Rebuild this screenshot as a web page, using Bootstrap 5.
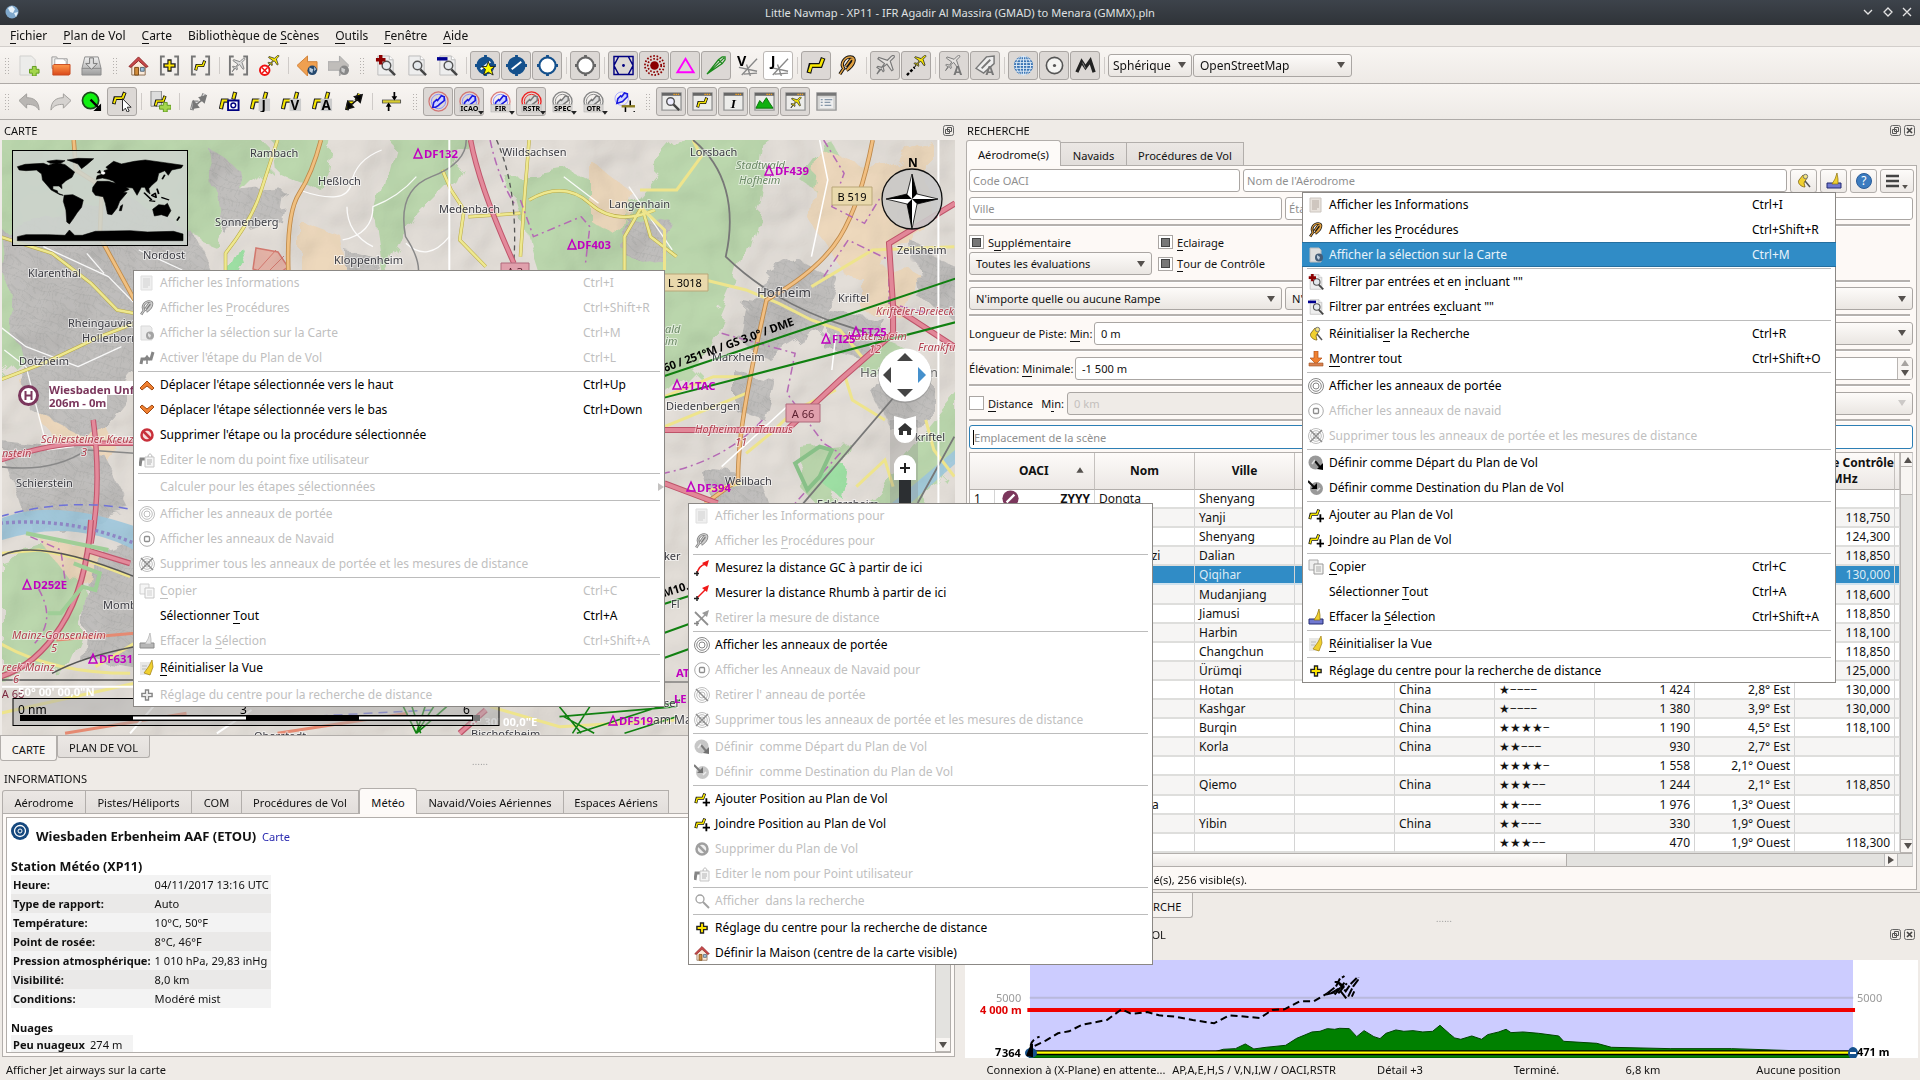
<!DOCTYPE html>
<html lang="fr">
<head>
<meta charset="utf-8">
<title>Little Navmap</title>
<link href="https://cdn.jsdelivr.net/npm/bootstrap@5.3.0/dist/css/bootstrap.min.css" rel="stylesheet">
<style>
body{width:1920px;height:1080px;overflow:hidden;background:#efebe7;color:#111;font-family:"Noto Sans",sans-serif;font-size:11.1px;line-height:19px}
svg{display:block;overflow:visible}
svg text{font-family:"Noto Sans",sans-serif}
u{text-decoration:none;box-shadow:0 1px 0 currentColor;display:inline-block;line-height:14px}
.titlebar{height:25px;background:linear-gradient(#3d434b,#2f3338);color:#dfe0e1;position:relative;flex:none}
.menubar{height:21px;padding-left:10px;gap:16px;flex:none;font-size:12px}
.toolrow{height:37px;background:linear-gradient(#f8f5f2,#eeeae6);border-top:1px solid #d2cecb;flex:none;padding-left:14px;position:relative}
.toolrow .combo{font-size:12px}
.toolrow.second{border-bottom:1px solid #aeaaa7;border-top-color:#aeaaa7}
.tb{width:30px;height:29px;margin-right:1px;border:1px solid transparent;border-radius:3px;display:flex;align-items:center;justify-content:center;flex:none}
.tb svg{width:21px;height:21px}
.tb.on{background:#dcd8d5;border-color:#aaa6a3}
.tb.lit{background:#fff;border-color:#bbb7b4}
.vsep{width:1px;height:17px;background:#cfcbc8;margin:0 3px;flex:none}
.grip{width:6px;height:17px;margin:0 5px;flex:none;background-image:radial-gradient(circle,#b5b1ae 35%,transparent 45%);background-size:3px 3px}
.grip.first{position:absolute;left:-1px}
.combo{height:23px;border:1px solid #aaa6a3;border-radius:3px;background:linear-gradient(#fdfbf9,#eae6e2);padding:0 6px;display:flex;align-items:center;justify-content:space-between;white-space:nowrap;overflow:hidden;flex:none}
.combo:after,.dn{content:"";border:4.5px solid transparent;border-top:6px solid #55514e;border-bottom:0;flex:none}
.combo.dim:after{opacity:.25}
.dock-title{height:20px;display:flex;align-items:center;justify-content:space-between;flex:none}
.dk{width:11px;height:11px}
.qtabs{display:flex;align-items:flex-end;flex:none}
.qtab{border:1px solid #b2aeab;border-bottom:0;border-left-width:0;background:linear-gradient(#ebe7e4,#e2dedb);height:23px;display:flex;align-items:center;justify-content:center;flex:none;padding-top:2px}
.qtab:first-child{border-left-width:1px;border-top-left-radius:3px}
.qtab.cur{background:#fdfaf8;margin-bottom:-1px;height:26px;border-radius:3px 3px 0 0;position:relative;border-left-width:1px}
.btabs{align-items:flex-start}
.btabs .qtab{border:1px solid #b2aeab;border-top:0;border-radius:0 0 3px 3px;height:22px}
.btabs .qtab.cur{background:#f5f2ef;height:25px;margin:0}
.pane{border:1px solid #b2aeab;background:#fdf9f6}
.form-col>*{flex:none}
.inp{height:23px;border:1px solid #aaa6a3;border-radius:3px;background:#fff;padding-left:3px;display:flex;align-items:center;color:#8f8f8f;flex:none;overflow:hidden;white-space:nowrap}
.inp.val{color:#111;padding-left:6px}
.inp.focus{border-color:#2d7fb5}
.inp.off{background:#efebe7;color:#c4c0bd}
.hline{height:3px;background:linear-gradient(#b5b1ae 66%,#fff 66%);margin-right:3px}
.chk{width:15px;height:14px;border:1px solid #aaa6a3;background:#fff;display:flex;align-items:center;justify-content:center;flex:none;margin-right:4px}
.chk.mid:before{content:"";width:9px;height:9px;background:#777;border:1px solid #444}
.sbtn{width:27px;height:24px;border:1px solid #b2aeab;border-radius:3px;background:linear-gradient(#fdfbf9,#ece8e5);display:flex;align-items:center;justify-content:center;flex:none}
.sbtn svg{width:16px;height:16px}
.ctx{position:absolute;display:block;min-width:0;padding:0;border:0;border-radius:0;margin:0;background:#fff;box-shadow:inset 0 0 0 1px #8b8885;font-size:12px;line-height:25px;z-index:5;color:#000}
.ctx .dropdown-item{display:flex;align-items:center;height:25px;padding:0 0 0 6px;color:#000;line-height:25px}
.ctx .dropdown-item.disabled{color:#bfbfbf}
.ctx .dropdown-item.hl{background:#308cc6;color:#e9f3fa;box-shadow:inset 0 1px #256f9f,inset 0 -1px #256f9f}
.ctx svg{width:16px;height:16px;margin-right:5px;flex:none}
.ctx .disabled svg{filter:grayscale(1);opacity:.55}
.ctx .key{flex:none}
.ctx .line{height:2px;margin:0 5px;border-bottom:1px solid #bcbcbc}
.air{table-layout:fixed;border-collapse:separate;border-spacing:0;width:930px;background:#fff;font-size:12px}
.air th{height:37px;border-right:1px solid #c5c1be;border-bottom:1px solid #b2aeab;background:linear-gradient(#fdfbf9,#ebe7e4);text-align:center;line-height:16px;padding:0}
.air td{height:19px;padding:0 4px;border-right:1px solid #d4d4d4;border-bottom:2px solid #dededc;line-height:17px;white-space:nowrap;overflow:hidden}
.air tr:nth-child(even) td{background:#f6f5f4}
.air tr.pick td{background:#308cc6!important;color:#dcebf5;border-bottom-color:#cfe2ee}
.info td{height:19px;line-height:19px;padding:0 2px;white-space:nowrap}
.info tr:nth-child(odd){background:#f3f3f3}.info tr:nth-child(even){background:#eae9e8}
.track{background:#e3e2df;border-left:1px solid #b9b5b2}
.arr{height:14px;background:#f8f5f2;display:flex;align-items:center;justify-content:center;border-bottom:1px solid #b9b5b2}
.status{height:22px;flex:none;line-height:24px}
.status span{flex:none;white-space:nowrap}
.dots{padding-left:470px;line-height:1px;color:#999;font-size:9px;letter-spacing:.3px}
.ns *{vector-effect:non-scaling-stroke}
</style>
</head>
<body class="d-flex flex-column">
<svg width="0" height="0" style="position:absolute"><defs>
<linearGradient id="gO" x1="0" y1="0" x2="0" y2="1"><stop offset="0" stop-color="#ff9a4d"/><stop offset="1" stop-color="#d9481a"/></linearGradient>
<linearGradient id="gG" x1="0" y1="0" x2="0" y2="1"><stop offset="0" stop-color="#f2f2f2"/><stop offset="1" stop-color="#9c9c9c"/></linearGradient>
<symbol id="page" viewBox="0 0 22 22"><path d="M3 1h12l4 4v16H3z" fill="#eee" stroke="#bbb"/><path d="M15 1v4h4" fill="#fff" stroke="#bbb"/></symbol>
<symbol id="new" viewBox="0 0 22 22"><path d="M1 1h12l4 4v16H1z" fill="#ececea" stroke="#d0d0ce"/><path d="M14 12h4v3h3v4h-3v3h-4v-3h-3v-4h3z" fill="#a4d64c" stroke="#5f9a1e"/></symbol>
<symbol id="open" viewBox="0 0 22 22"><path d="M2 2h5l1 2h10v10H2z" fill="#f2f0ee" stroke="#999"/><path d="M5 4h9l3 3v7H5z" fill="#fff" stroke="#aaa"/><path d="M3 11l1-1h17v10l-1 1H3z" fill="url(#gO)" stroke="#c74b20"/></symbol>
<symbol id="save" viewBox="0 0 22 22"><path d="M4 2h14l3 12v7H1v-7z" fill="url(#gG)" stroke="#8d8d8d"/><path d="M1 14h20" stroke="#888"/><path d="M9 3h4v6h4l-6 6-6-6h4z" fill="#ddd" stroke="#777"/></symbol>
<symbol id="home" viewBox="0 0 22 22"><path d="M4 11v10h14V11l-7-7z" fill="#fbead9" stroke="#8b6c50"/><path d="M1 12L11 2l10 10-2 1-8-7-8 7z" fill="#c9484a" stroke="#8e2828"/><path d="M7 13h4v8H7z" fill="#d08b3a" stroke="#7b4a16"/><path d="M13 13h4v4h-4z" fill="#9cc2dd" stroke="#567"/></symbol>
<symbol id="brk" viewBox="0 0 22 22"><path d="M6 1.500H2v19h4M16 1.500h4v19h-4" fill="none" stroke="#777" stroke-width="2"/></symbol>
<symbol id="plus" viewBox="0 0 22 22"><path d="M11 3v16M3 11h16" stroke="#222" stroke-width="6"/><path d="M11 5v12M5 11h12" stroke="#ffe600" stroke-width="2.600"/></symbol>
<symbol id="cplus" viewBox="0 0 22 22"><use href="#brk"/><path d="M11 4.500v13M4.500 11h13" stroke="#222" stroke-width="4.500"/><path d="M11 6v10M6 11h10" stroke="#ffe600" stroke-width="2"/></symbol>
<symbol id="route" viewBox="0 0 22 22"><path d="M3 19L5 11h10l3-8" fill="none" stroke="#111" stroke-width="5"/><path d="M3.300 18L5.500 11h9.500l2.700-7" fill="none" stroke="#f8e800" stroke-width="2.600"/></symbol>
<symbol id="croute" viewBox="0 0 22 22"><use href="#brk"/><use href="#route" x="4" y="4" width="14" height="14"/></symbol>
<symbol id="pl" viewBox="0 0 22 22"><path d="M2 20l3-5-3-2 1-1 4 1 3-4-7-5 1-1.500 9 3 4-4c2-2 4-1 3 1l-4 4 3 9-1.500 1-5-7-4 3 1 4-1 1-2-3z" stroke-width="1.200"/></symbol>
<symbol id="cplane" viewBox="0 0 22 22"><use href="#brk"/><use href="#pl" x="3" y="3" width="16" height="16" fill="#ddd" stroke="#777"/></symbol>
<symbol id="planex" viewBox="0 0 22 22"><use href="#pl" x="8" y="0" width="14" height="14" fill="#f8e800" stroke="#222"/><circle cx="6" cy="16" r="5" fill="#fff" stroke="#f01010" stroke-width="2"/><path d="M3 13l6 6M9 13l-6 6" stroke="#f01010" stroke-width="1.500"/></symbol>
<symbol id="gplane" viewBox="0 0 22 22"><use href="#pl" fill="#e5e2df" stroke="#777"/></symbol>
<symbol id="back" viewBox="0 0 22 22"><path d="M0 11L11 1v6h10v9H11v6z" fill="#f0a050" stroke="#d08038"/><circle cx="16" cy="16" r="5" fill="#24486e"/><path d="M13 13l4 2-1 4-3-2zM18 12l2 3-2 2z" fill="#bcd"/></symbol>
<symbol id="fwd" viewBox="0 0 22 22"><path d="M22 11L12 1v6H0v9h12v6z" fill="#c0bdba" stroke="#aaa"/><circle cx="17" cy="16" r="5" fill="#888"/><path d="M14 13l4 2-1 4-3-2z" fill="#ccc"/></symbol>
<symbol id="find" viewBox="0 0 22 22"><use href="#page"/><circle cx="12" cy="11" r="4.500" fill="#e5e9ed" stroke="#555" stroke-width="1.500"/><path d="M15 15l6 6" stroke="#444" stroke-width="2.500"/></symbol>
<symbol id="findp" viewBox="0 0 22 22"><use href="#find"/><path d="M6 0v10M1 5h10" stroke="#8c0000" stroke-width="3.600"/></symbol>
<symbol id="findm" viewBox="0 0 22 22"><use href="#find"/><path d="M0 4h11" stroke="#000090" stroke-width="3.600"/></symbol>
<symbol id="apt" viewBox="0 0 22 22"><path d="M11 0v22M0 11h22" stroke="#14508c" stroke-width="3"/><circle cx="11" cy="11" r="9.500" fill="#14508c"/><path d="M6 15L16 7" stroke="#fff" stroke-width="2"/></symbol>
<symbol id="apts" viewBox="0 0 22 22"><use href="#apt"/><path d="M14 7l2 5h5l-4 3 2 6-5-3-5 3 2-6-4-3h5z" fill="#ff0" stroke="#222"/></symbol>
<symbol id="apto" viewBox="0 0 22 22"><path d="M11 0v22M0 11h22" stroke="#14508c" stroke-width="3"/><circle cx="11" cy="11" r="8.500" fill="#fff" stroke="#14508c" stroke-width="2.200"/></symbol>
<symbol id="aptg" viewBox="0 0 22 22"><path d="M11 0v22M0 11h22" stroke="#666" stroke-width="3"/><circle cx="11" cy="11" r="8.500" fill="#fff" stroke="#666" stroke-width="2.200"/></symbol>
<symbol id="vor" viewBox="0 0 22 22"><path d="M1 1.500h20v19H1zM6 1.500h10l5 9.500-5 9.500H6L1 11z" fill="none" stroke="#000080" stroke-width="1.500"/><circle cx="11" cy="11" r="1.500" fill="#000080"/></symbol>
<symbol id="ndb" viewBox="0 0 22 22"><g fill="none" stroke="#8b0000" stroke-width="1.800" stroke-dasharray="1.700 1.800"><circle cx="11" cy="11" r="10"/><circle cx="11" cy="11" r="7"/></g><circle cx="11" cy="11" r="4.500" fill="#8b0000"/></symbol>
<symbol id="wpt" viewBox="0 0 22 22"><path d="M11 4l8.500 14h-17z" fill="none" stroke="#f0f" stroke-width="2"/></symbol>
<symbol id="ils" viewBox="0 0 22 22"><path d="M1 20L13 5l4-3h3v3l-3 4zM13 5l4 4M1 20L19 3" fill="none" stroke="#1a8a1a" stroke-width="1.300"/></symbol>
<symbol id="airv" viewBox="0 0 22 22"><path d="M2 13l19 4M21 4L5 21M10 10l4 12M7 20l14-1" stroke="#888" stroke-width="1.400"/><text x="0" y="12" font-size="15" font-weight="bold">V</text></symbol>
<symbol id="airj" viewBox="0 0 22 22"><path d="M2 13l19 4M21 4L5 21M10 10l4 12M7 20l14-1" stroke="#888" stroke-width="1.400"/><text x="3" y="12" font-size="15" font-weight="bold">J</text></symbol>
<symbol id="clip" viewBox="0 0 22 22"><path d="M3 20L7 14C3 9 8 2 14 2c7 0 4 9-4 14M9 12l5-7c2-2 4 0 2 3l-6 8" fill="none" stroke="#111" stroke-width="3.500"/><path d="M3 20L7 14C3 9 8 2 14 2c7 0 4 9-4 14M9 12l5-7c2-2 4 0 2 3l-6 8" fill="none" stroke="#e0a040" stroke-width="1.500"/></symbol>
<symbol id="ptrail" viewBox="0 0 22 22"><use href="#pl" x="7" y="0" width="15" height="15" fill="#f8e800" stroke="#222"/><path d="M1 21l8-8" stroke="#000" stroke-width="2.500" stroke-dasharray="3 2"/></symbol>
<symbol id="planeA" viewBox="0 0 22 22"><use href="#gplane" x="0" y="0" width="18" height="18"/><text x="10" y="21" font-size="13" font-weight="bold" fill="#777">A</text></symbol>
<symbol id="shipA" viewBox="0 0 22 22"><path d="M1 14L12 2l8-1v8L9 19z" fill="#eee" stroke="#777" stroke-width="1.500"/><path d="M7 14l9-9" stroke="#777" stroke-width="2"/><text x="11" y="21" font-size="13" font-weight="bold" fill="#777">A</text></symbol>
<symbol id="globe" viewBox="0 0 22 22"><circle cx="11" cy="11" r="10" fill="#3a74b4"/><g fill="none" stroke="#dbe9f6"><ellipse cx="11" cy="11" rx="3.500" ry="10"/><ellipse cx="11" cy="11" rx="7.500" ry="10"/><path d="M11 1v20M1 11h20M3 5h16M3 17h16M2 8h18M2 14h18"/></g></symbol>
<symbol id="ring" viewBox="0 0 22 22"><circle cx="11" cy="11" r="8.500" fill="#f4f4f2" stroke="#555" stroke-width="1.700"/><circle cx="11" cy="11" r="1.700" fill="#555"/></symbol>
<symbol id="hill" viewBox="0 0 22 22"><path d="M2 18L7 7l4 6 5-7 4 12" fill="none" stroke="#222" stroke-width="3.500"/><path d="M8 8l3 6" stroke="#888"/></symbol>
<symbol id="undo" viewBox="0 0 22 22"><path d="M0 10l8-7v4c8 0 13 4 13 13-3-5-7-6-13-6v4z" fill="#b9b6b3" stroke="#a09d9a"/></symbol>
<symbol id="redo" viewBox="0 0 22 22"><path d="M22 10l-8-7v4C6 7 1 11 1 20c3-5 7-6 13-6v4z" fill="#d5d2cf" stroke="#a09d9a"/></symbol>
<symbol id="dep" viewBox="0 0 22 22"><circle cx="10" cy="10" r="8.500" fill="#10f010" stroke="#1c4a1c" stroke-width="1.800"/><path d="M10 9l8 8" stroke="#000" stroke-width="2.500"/><path d="M21 21v-8l-8 8z"/></symbol>
<symbol id="edit" viewBox="0 0 22 22"><use href="#route" x="-1" y="-1" width="18" height="17"/><path d="M11 8l9 9h-4l2 4-2 1-2-4-3 3z" fill="#fff" stroke="#222"/></symbol>
<symbol id="radd" viewBox="0 0 22 22"><path d="M1 0h11v16H1z" fill="#ddd" stroke="#888"/><use href="#route" x="3" y="3" width="16" height="15"/><path d="M14 12h4v3h4v4h-4v3h-4v-3h-4v-4h4z" fill="#a4d64c" stroke="#5f9a1e"/></symbol>
<symbol id="rplus" viewBox="0 0 22 22"><use href="#route" x="0" y="1" width="18" height="18"/><path d="M17 10v11M12 16h10" stroke="#000" stroke-width="2.500"/></symbol>
<symbol id="calc" viewBox="0 0 22 22"><path d="M4 20l2-8h5M14 10l3-7" fill="none" stroke="#888" stroke-width="4"/><path d="M4 19l2-7h5M14 9l3-6" fill="none" stroke="#ddd" stroke-width="1.500"/><path d="M8 15l7-6M19 5l-2 7-5-5zM5 18l1-7 5 6z" stroke="#777" fill="#777" stroke-width="1.500"/></symbol>
<symbol id="calcb" viewBox="0 0 22 22"><path d="M4 20l2-8h5M14 10l3-7" fill="none" stroke="#111" stroke-width="4"/><path d="M4 19l2-7h5M14 9l3-6" fill="none" stroke="#f8e800" stroke-width="2"/><path d="M8 15l7-6M20 4l-2 8-6-6zM4 19l1-8 6 6z" stroke="#111" stroke-width="1.500"/></symbol>
<symbol id="rpre" viewBox="0 0 22 22"><path d="M2 19l2-9h6M15 9l2-8" fill="none" stroke="#222" stroke-width="4.500"/><path d="M2 18l2-8h5.500M15 8l1.700-6" fill="none" stroke="#f8e800" stroke-width="2.200"/></symbol>
<symbol id="rv" viewBox="0 0 22 22"><use href="#rpre"/><path d="M9.500 10h11v10h-11z" fill="#fff" stroke="#000080" stroke-width="2"/><circle cx="15" cy="15" r="2.500" fill="none" stroke="#000080" stroke-width="1.500"/></symbol>
<symbol id="rj" viewBox="0 0 22 22"><use href="#rpre"/><path d="M9 8h12v13H9z" fill="#ccc"/><text x="12" y="20" font-size="14" font-weight="bold">J</text></symbol>
<symbol id="rvv" viewBox="0 0 22 22"><use href="#rpre"/><path d="M9 8h12v13H9z" fill="#ccc"/><text x="10" y="20" font-size="14" font-weight="bold">V</text></symbol>
<symbol id="ra" viewBox="0 0 22 22"><use href="#rpre"/><path d="M9 8h12v13H9z" fill="#ccc"/><text x="10" y="20" font-size="14" font-weight="bold">A</text></symbol>
<symbol id="alt" viewBox="0 0 22 22"><path d="M1 11h20" stroke="#555" stroke-width="4"/><path d="M2 11h18" stroke="#d8cc30" stroke-width="2.500"/><path d="M8 21v-7M14 1v7" stroke="#000" stroke-width="1.800"/><path d="M8 12l-3 4.500h6zM14 10l-3-4.500h6z"/></symbol>
<symbol id="as" viewBox="0 0 22 22"><circle cx="11" cy="11" r="10" fill="none" stroke="currentColor" stroke-opacity=".6" stroke-width="1.300"/><circle cx="11" cy="11" r="7.500" fill="none" stroke="#88f"/><path d="M5 17l1-5 3-3 1 1 4-5 3 1 0 4-5 4-1 1-3 2z" fill="#cfd4ff" stroke="#1818e0" stroke-width="1.700"/></symbol>
<symbol id="asg" viewBox="0 0 22 22"><circle cx="11" cy="11" r="10" fill="none" stroke="currentColor" stroke-width="1.400"/><circle cx="11" cy="11" r="7.500" fill="none" stroke="currentColor"/><path d="M5 17l1-5 3-3 1 1 4-5 3 1 0 4-5 4-1 1-3 2z" fill="#ddd" stroke="#777" stroke-width="1.500"/></symbol>
<symbol id="asalt" viewBox="0 0 22 22"><circle cx="8" cy="8" r="7" fill="none" stroke="#aaf"/><path d="M3 13l1-5 3-3 1 1 3-4 3 1 0 3-4 4-1 1-3 1z" fill="#cfd4ff" stroke="#1818e0" stroke-width="1.700"/><path d="M8 16h14" stroke="#8a7c20" stroke-width="2.500"/><path d="M12 22v-5M17 10v5" stroke="#000" stroke-width="1.600"/><path d="M20 21h6l-3 4z" fill="#222"/></symbol>
<symbol id="win" viewBox="0 0 22 22"><path d="M1 2h20v18H1z" fill="#ececea" stroke="#999" stroke-width="1.500"/><path d="M1 2h20v3H1z" fill="#666"/><path d="M13 3.500h6" stroke="#f0a020" stroke-width="1.500" stroke-dasharray="1.500 .8"/></symbol>
<symbol id="wf" viewBox="0 0 22 22"><use href="#win"/><circle cx="10" cy="11" r="4" fill="#eef" stroke="#555" stroke-width="1.500"/><path d="M13 14l6 6" stroke="#444" stroke-width="2.500"/></symbol>
<symbol id="wr" viewBox="0 0 22 22"><use href="#win"/><use href="#route" x="4" y="5" width="14" height="14"/></symbol>
<symbol id="wi" viewBox="0 0 22 22"><use href="#win"/><text x="8" y="18" font-size="14" font-weight="bold" font-style="italic" style="font-family:'Liberation Serif',serif">I</text></symbol>
<symbol id="wh" viewBox="0 0 22 22"><use href="#win"/><path d="M2 18l4-8 3 3 4-6 3 5 4 6z" fill="#10b010" stroke="#087008"/></symbol>
<symbol id="wp" viewBox="0 0 22 22"><use href="#win"/><use href="#pl" x="5" y="6" width="13" height="13" fill="#f8e800" stroke="#222"/></symbol>
<symbol id="wl" viewBox="0 0 22 22"><path d="M1 2h20v18H1z" fill="#d5d5d3" stroke="#999" stroke-width="1.500"/><path d="M1 2h20v3H1z" fill="#777"/><path d="M4 7h14v11H4z" fill="#eee"/><path d="M5 9h2M5 12h2M5 15h2M9 9h8M9 12h6M9 15h7" stroke="#89a" stroke-width="1.300"/></symbol>
<symbol id="doc" viewBox="0 0 16 16"><path d="M2 1h11v14H2z" fill="#e8e2dc" stroke="#ccc6c0"/><path d="M4 4h7M4 6h7M4 8h7M4 10h7M4 12h5" stroke="#b5aaa2"/></symbol>
<symbol id="docg" viewBox="0 0 16 16"><path d="M2 1h9l2 2v12H2z" fill="#dedede" stroke="#bbb"/><circle cx="11" cy="10.500" r="4" fill="#445d78"/><path d="M9 8l3 2-1 3-2-2z" fill="#bcd"/></symbol>
<symbol id="act" viewBox="0 0 16 16"><path d="M2 14l1-5h9l2-7" fill="none" stroke="#222" stroke-width="3"/><path d="M8 14V7M5 10l3-4 3 4" fill="none" stroke="#222" stroke-width="1.500"/></symbol>
<symbol id="up" viewBox="0 0 16 16"><path d="M1 11l7-7 7 7-2 2-5-4-5 4z" fill="#f08030" stroke="#a04a14"/></symbol>
<symbol id="down" viewBox="0 0 16 16"><path d="M1 5l7 7 7-7-2-2-5 4-5-4z" fill="#f08030" stroke="#a04a14"/></symbol>
<symbol id="no" viewBox="0 0 16 16"><circle cx="8" cy="8" r="5.500" fill="#f6dcdc" stroke="#c8303a" stroke-width="2.500"/><path d="M4 4l8 8" stroke="#c8303a" stroke-width="2.500"/></symbol>
<symbol id="name" viewBox="0 0 16 16"><path d="M1 14l1-7h5" fill="none" stroke="#222" stroke-width="3"/><path d="M6 5h9v10H6z" fill="#eee" stroke="#999"/><path d="M9 5c0-4 4-4 4 0M8 8h5M8 10h5M8 12h4" fill="none" stroke="#777"/></symbol>
<symbol id="rings" viewBox="0 0 16 16"><g fill="none" stroke="#888"><circle cx="8" cy="8" r="7.500"/><circle cx="8" cy="8" r="5.300"/><circle cx="8" cy="8" r="3"/></g></symbol>
<symbol id="nring" viewBox="0 0 16 16"><circle cx="8" cy="8" r="7.300" fill="none" stroke="#666"/><rect x="5.500" y="5.500" width="5" height="5" rx="1" fill="none" stroke="#333" stroke-width="1.300"/></symbol>
<symbol id="ringx" viewBox="0 0 16 16"><use href="#rings"/><path d="M2 2l12 12M14 2L2 14" stroke="#333" stroke-width="1.500"/></symbol>
<symbol id="ring1" viewBox="0 0 16 16"><use href="#rings"/><path d="M2 2l12 12" stroke="#333" stroke-width="1.500"/></symbol>
<symbol id="copy" viewBox="0 0 16 16"><path d="M1 1h9v10H1z" fill="#eee" stroke="#aaa"/><path d="M6 5h9v10H6z" fill="#f3f3f1" stroke="#999"/><path d="M8 8h5M8 10h5M8 12h5" stroke="#aaa"/></symbol>
<symbol id="clr" viewBox="0 0 16 16"><path d="M1 10h14v5H1z" fill="#7078d0" stroke="#222a70"/><path d="M11 0l-2 6-3 5h6l0-5z" fill="#f0d030" stroke="#8a7010" stroke-width=".7"/></symbol>
<symbol id="rst" viewBox="0 0 16 16"><path d="M1 2h11v13H1z" fill="#e8e8e6"/><path d="M3 6h5M3 9h4" stroke="#bbb"/><path d="M13 0l-3 6-5 7 6 2 3-8z" fill="#f0d030" stroke="#a08010" stroke-width=".7"/></symbol>
<symbol id="broom" viewBox="0 0 16 16"><path d="M7 2L3 7c-2 3 2 7 6 7l-1-4 3-5z" fill="#f0d030" stroke="#7a6010" stroke-width=".8"/><circle cx="9.500" cy="3.500" r="2.200" fill="#f4e480" stroke="#777"/><path d="M9 8l5 6" stroke="#555" stroke-width="1.500"/></symbol>
<symbol id="all" viewBox="0 0 16 16"><path d="M6 0h4v7h4l-6 6-6-6h4z" fill="#f08030" stroke="#b0501a" stroke-width=".7"/><path d="M1 12h14v3H1z" fill="#d88050" stroke="#a05020" stroke-width=".6"/></symbol>
<symbol id="setd" viewBox="0 0 16 16"><circle cx="7.500" cy="7.500" r="7" fill="#999"/><path d="M7 6l5 6" stroke="#111" stroke-width="2"/><path d="M15 15V8l-6 6z"/><path d="M4 9l3-4" stroke="#ddd" stroke-width="1.500"/></symbol>
<symbol id="sete" viewBox="0 0 16 16"><circle cx="8.500" cy="8.500" r="6.500" fill="#999"/><path d="M0 1l6 6" stroke="#111" stroke-width="2"/><path d="M9 3v6H3z"/><path d="M9 11l3-3" stroke="#ddd" stroke-width="1.500"/></symbol>
<symbol id="gc" viewBox="0 0 16 16"><path d="M3 14C4 8 7 5 12 4" fill="none" stroke="#f01818" stroke-width="1.500"/><path d="M15 0l-2 7-5-4z" fill="#f01818"/><path d="M3 11v5M0 13.500h5" stroke="#222" stroke-width="1.500"/></symbol>
<symbol id="rh" viewBox="0 0 16 16"><path d="M3 13l9-9" fill="none" stroke="#f01818" stroke-width="1.500"/><path d="M15 0l-2 7-5-4z" fill="#f01818"/><path d="M3 11v5M0 13.500h5" stroke="#222" stroke-width="1.500"/></symbol>
<symbol id="gcx" viewBox="0 0 16 16"><use href="#rh"/><path d="M1 2l13 13" stroke="#333" stroke-width="1.800"/></symbol>
<symbol id="mag" viewBox="0 0 16 16"><circle cx="6" cy="6" r="4" fill="none" stroke="#555" stroke-width="1.300"/><path d="M9 9l6 6" stroke="#555" stroke-width="2"/></symbol>
<symbol id="q" viewBox="0 0 16 16"><circle cx="8" cy="8" r="7.500" fill="#3c7cc0" stroke="#2a5c98"/><text x="5.200" y="12.300" font-size="12" fill="#fff">?</text></symbol>
<symbol id="dock" viewBox="0 0 11 11"><rect x=".5" y=".5" width="10" height="10" rx="2" fill="none" stroke="#666"/><path d="M4.500 2.500h4v4h-4zM2.500 4.500h4v4h-4z" fill="none" stroke="#555"/></symbol>
<symbol id="close" viewBox="0 0 11 11"><rect x=".5" y=".5" width="10" height="10" rx="2" fill="none" stroke="#666"/><path d="M3 3l5 5M8 3L3 8" stroke="#444" stroke-width="1.700"/></symbol>
</defs></svg>

<header class="titlebar d-flex align-items-center justify-content-center">
  <span>Little Navmap - XP11 - IFR Agadir Al Massira (GMAD) to Menara (GMMX).pln</span>
  <svg width="1920" height="25" style="position:absolute;left:0;top:0"><circle cx="12" cy="12" r="6.500" fill="#7fa8cc"/><path d="M8 8l4-2 3 3-2 4-3-1zM14 13l4-1-2 5z" fill="#e8f2fa"/><g fill="none" stroke="#e4e4e4" stroke-width="1.300"><path d="M1864 10l4 4 4-4M1888 8l4 4-4 4-4-4zM1903 8l8 8M1911 8l-8 8"/></g></svg>
</header>
<nav class="menubar d-flex align-items-center"><span><u>F</u>ichier</span><span><u>P</u>lan de Vol</span><span><u>C</u>arte</span><span>Bibliothèque de <u>S</u>cènes</span><span><u>O</u>utils</span><span><u>F</u>enêtre</span><span><u>A</u>ide</span></nav>
<div class="toolrow d-flex align-items-center" id="bar1"></div>
<div class="toolrow second d-flex align-items-center" id="bar2"></div>

<main class="d-flex flex-grow-1" style="min-height:0">
 <section class="d-flex flex-column" style="width:957px;padding-left:2px">
  <div class="dock-title" style="padding:0 3px 0 2px"><span>CARTE</span><svg class="dk"><use href="#dock"/></svg></div>
  <svg id="map" width="953" height="595" viewBox="2 140 953 595" style="overflow:hidden;flex:none">
   <defs>
   <filter id="rough"><feTurbulence type="fractalNoise" baseFrequency=".013" numOctaves="3" seed="4" result="n"/><feDiffuseLighting in="n" surfaceScale="14" lighting-color="#fff" result="l"><feDistantLight azimuth="225" elevation="60"/></feDiffuseLighting></filter>
   <filter id="wob" x="-5%" y="-5%" width="110%" height="110%"><feTurbulence type="fractalNoise" baseFrequency=".035" numOctaves="3" seed="2"/><feDisplacementMap in="SourceGraphic" scale="26"/></filter>
   <pattern id="urb" width="11" height="9" patternUnits="userSpaceOnUse" patternTransform="rotate(22)"><rect width="11" height="9" fill="#c2c0be"/><path d="M0 0h11M0 0v9M5 0v5" stroke="#acaaa8" stroke-width=".7"/></pattern></defs>
   <path fill="#e4dfd9" d="M0 140h960v600H0z"/>
   <g filter="url(#wob)">
    <g fill="#bcd8ae"><path d="M0 130h260l10 40-30 30-40 20-25 35-30-10-60 25-30 60-90 70z"/><path d="M270 130h60l-10 60-45-20zM395 130h80l-20 50-40 40-30 60-10-70zM510 180l60-10 60 30 60-70h80l-10 70-25 90-30 70-50 50-60-20-40-60-25-80z"/><path d="M830 140l20 30-20 30-30-20zM0 560l60-20 30 60-30 70-60 10zM860 330l50 20-10 30-40-10zM800 448l50-5-25 70-24-25zM870 500l90-110v60l-50 90zM180 140l60 40-30 60-50-20z"/></g>
    <g fill="#eed9bd"><path d="M300 220l40 15 10 50-50 5zM590 160l40 30-10 50-30-20zM820 150l50 20 60-30v90l-80 50-40-60zM860 260l60 10-10 50-50-10zM20 380l60 10 40 60-50 20zM40 540l50 5 40 40-60-5z"/></g>
    <g fill="url(#urb)"><path d="M0 230l130-30 60 30 30 60-60 60-70 90-60-30-20-90zM210 150l30 20 10 50-30 10zM240 195l45-5-5 30-30 10zM345 250l40 10-10 30-30-5zM625 215l50 10-10 40-40-10zM750 290l50-30 40 20-20 50-50 30-30-20zM735 370l40 10-10 40-30-10zM620 455l-10 30 40 10 10-20zM910 240l50 30v50l-40-20zM825 310l60 10-20 40-40-10zM0 440l100 10 30 60-100 20zM90 560l50-20v130l-60-10zM700 470l60 10 10 30h-60z"/><path d="M870 390l60-10v40l-40 10z"/></g>
    <path fill="#9ee0a4" d="M240 245l6 20-16 30-5-18zM830 465l15 0-6 30-15-10z"/>
   </g>
   <path fill="#e6a99b" fill-opacity=".8" stroke="#d67a70" stroke-width="1.500" d="M256 248l22 4 10 15-13 9-22-7z"/><path d="M258 270l18-20M266 274l18-18" stroke="#d67a70"/>
   <path d="M2 518q50-20 132 8v24q-60-32-132-10zM750 600q80-30 110-70l95-80v14L880 530q-40 60-120 85z" fill="#9fc9de" fill-opacity=".9"/>
   <path d="M2 140h953v595H2z" filter="url(#rough)" style="mix-blend-mode:multiply" opacity=".34"/>
   <g class="ns" fill="none" stroke-linejoin="round" transform="translate(0 120) scale(.4337 .3333)">
    <g stroke="#fff" stroke-width="1.300" opacity=".9"><path d="M880 90q-60 30-70 100t-120 20M960 170q-40 60-100 90 0 80-70 100M860 380q-60-40-60-120M1036 350q-50 80-100 20M10 690l50 50 50 250 60-10M0 620l60 60 120 60 100-60M100 380l150 90 60 80M200 400l40 60M320 390l100 60M1300 170l80 80M1450 200l100 190"/></g>
    <g stroke="#b9a944" stroke-width="3.500"><path d="M640 60q-20 80-40 160T520 400l0 60M1020 150l20 60 30 60-10 90 60 80M1220 60l-10 160-10 190M1220 240q80-60 140 10t150 20M1480 260l20 90 60 60M1480 260l-40 90 0 110M0 350l120 50 90 90 60 80 40 10M310 610l-80 40-130 80-100 50M1080 290l120-10"/></g>
    <g stroke="#eee88f" stroke-width="2.500"><path d="M640 60q-20 80-40 160T520 400l0 60M1020 150l20 60 30 60-10 90 60 80M1220 60l-10 160-10 190M1220 240q80-60 140 10t150 20M1480 260l20 90 60 60M1480 260l-40 90 0 110M0 350l120 50 90 90 60 80 40 10M310 610l-80 40-130 80-100 50M1080 290l120-10"/></g>
    <g stroke="#bf8a4a" stroke-width="4.500"><path d="M740 60q-20 100-50 160t-25 240M170 60l5 90 60 50-5 150 80 190"/></g><g stroke="#f0c080" stroke-width="2.800"><path d="M740 60q-20 100-50 160t-25 240M170 60l5 90 60 50-5 150 80 190"/></g>
    <path stroke="#888" stroke-width="1.500" d="M1075 60q0 70-80 110t-60 180q30 60 30 100M0 1040q120 20 200-50l110 10"/>
    <path stroke="#b56ab5" stroke-width="1.500" stroke-dasharray="8 4 2 4" d="M1130 60q20 120 60 200M1200 240l30 110 110-60 20 30-10 110"/>
    <path stroke="#555" stroke-width="1.300" stroke-dasharray="5 4" d="M1145 60q50 150 40 360"/>
    <path stroke="#c0566c" stroke-width="5.500" d="M1085 60q20 140 100 370M0 1020q120-50 190-50h120M215 900q20 200-5 370"/><path stroke="#e38a9b" stroke-width="3.500" d="M1085 60q20 140 100 370M0 1020q120-50 190-50h120M215 900q20 200-5 370"/>
    <path stroke="#6e72d8" stroke-width="1.500" stroke-dasharray="9 6" d="M0 1190q160-60 310-20"/><path stroke="#8e86c4" stroke-width="3.500" stroke-dasharray="3 3" d="M0 1210q160-20 310 60"/>
    <path stroke="#fff" stroke-width="2" d="M1036 60v390"/>
   </g>
   <g class="ns" fill="none" transform="translate(640 120) scale(.4082 .3333)">
    <path stroke="#eee48c" stroke-width="3" d="M130 60l20 50-60 100-90 0M0 260l60 70 0 120M160 480l100 30 80 40 80 50 70 30 60 90M60 830l120-60 70 0M60 920l200-100M260 1000l60-60 60-70 100-60M250 1090l-80 20M420 500l150-110 200-10M500 760l20 80 80 60M700 900l20 90 50 80M530 1100l70-80 20 80"/>
    <path stroke="#bd8849" stroke-width="4.500" d="M570 60q-30 190-80 290T310 540q-30 160-50 300t-20 240l-80 70"/><path stroke="#f1bf82" stroke-width="2.800" d="M570 60q-30 190-80 290T310 540q-30 160-50 300t-20 240l-80 70"/>
    <path stroke="#777" stroke-width="1.800" d="M130 60q60 60 80 150t0 200q100 120 250 190l150 60M700 720L400 1150M770 950l-90 200"/>
    <path stroke="#fff" stroke-width="1.500" d="M440 60l20 120-40 230M480 640l-10 110M200 1040l160-180"/>
    <path stroke="#b56ab5" stroke-width="1.500" stroke-dasharray="8 4 2 4" d="M450 60l50 100-30 100 80 50 40-80M450 470l60-110 100 60 0 130 100 30M200 640l180 60-20 120 90 150 40 30-110 150M300 900q-90 120-240 160"/>
    <path stroke="#88c088" stroke-width="4" d="M380 1030l60-50 30 10-30 80-30 40z"/>
    <path stroke="#be5369" stroke-width="6" d="M772 250L610 370l10 190 0 80-130 140-70 80-60 70H60M620 560l150 120M60 1090l130 60"/><path stroke="#e28798" stroke-width="4" d="M772 250L610 370l10 190 0 80-130 140-70 80-60 70H60M620 560l150 120M60 1090l130 60"/>
    <path stroke="#fff" stroke-width="2" d="M731 60v1090"/>
    <path stroke="#118011" stroke-width="2" d="M60 768L772 476M60 833l712-226"/>
   </g>
   <g class="ns" fill="none" transform="translate(0 520) scale(.4337 .3333)">
    <path stroke="#eee48c" stroke-width="3" d="M0 100l90-10 110 30 100 50M0 370q120 90 300 90M310 490L0 580M220 440l90-70M1130 560l160 60 270-20"/>
    <path stroke="#c0566c" stroke-width="6" d="M210 0q-10 200-70 320T0 470M200 90l100 40M1060 640l60-70"/><path stroke="#e38a9b" stroke-width="3.500" d="M210 0q-10 200-70 320T0 470M200 90l100 40M1060 640l60-70"/>
    <path stroke="#b56ab5" stroke-width="1.500" stroke-dasharray="8 4 2 4" d="M70 50l70 40 10 90-60 30q40 90-10 160"/>
    <path stroke="#9fce97" stroke-width="4" d="M60 40l190 50M170 130l60 30-10 50-30-10-50 80-30 0"/>
    <path stroke="#555" stroke-width="1.500" d="M0 110q80-60 310 60M0 480h310M310 380q-120 30-190 80"/>
    <path stroke="#e58a72" stroke-width="3" d="M310 340l-180 20M150 640l280-60M640 640l300-60"/>
    <path stroke="#fff" stroke-width="2" d="M0 500h310M300 640l60-90M500 640l80-70"/><path stroke="#6e72d8" stroke-width="1.500" stroke-dasharray="9 6" d="M700 590l300-20"/>
    <path stroke="#118011" stroke-width="1.600" d="M930 560l30 80M950 560l20 80M980 560l-20 80M1030 560l-70 80M1000 560l-40 80M1290 560l50 80M1360 560l-40 80M1290 590l270-30M1300 590l70 50M1330 640l238-100M1440 640l120-50"/>
   </g>
   <g stroke="#118011" stroke-width="2"><path d="M664 604l25-8M664 633l25-9M664 658l25-9"/></g><path d="M664 682h25" stroke="#555"/>
   <g font-size="11" fill="#3b3b42" stroke="#fff" stroke-opacity=".55" stroke-width="2" paint-order="stroke">
    <text x="250" y="157">Rambach</text><text x="318" y="185">Heßloch</text><text x="502" y="156">Wildsachsen</text><text x="439" y="213">Medenbach</text><text x="609" y="208">Langenhain</text><text x="215" y="226">Sonnenberg</text><text x="334" y="264">Kloppenheim</text><text x="143" y="259">Nordost</text><text x="28" y="277">Klarenthal</text><text x="68" y="327">Rheingauviertel,</text><text x="82" y="342">Hollerborn</text><text x="19" y="365">Dotzheim</text><text x="16" y="487">Schierstein</text><text x="103" y="609">Mombach</text><text x="690" y="156">Lorsbach</text><text x="757" y="297" font-size="13.300">Hofheim</text><text x="838" y="302">Kriftel</text><text x="897" y="254">Zeilsheim</text><text x="712" y="361">Marxheim</text><text x="860" y="377" font-size="13.300" fill="#666">Hattersheim</text><text x="666" y="410">Diedenbergen</text><text x="725" y="485">Weilbach</text><text x="817" y="508">Eddersheim</text><text x="915" y="441">kriftel</text><text x="254" y="740">Oberstadt</text><text x="471" y="738">Bischofsheim</text><text x="653" y="724" font-size="12">am Main</text><text x="664" y="707">sel</text><text x="664" y="560">ker</text><text x="671" y="608">Fl</text>
    <g font-style="italic" fill="#6c8a66"><text x="736" y="169">Stadtwald</text><text x="739" y="184">Hofheim</text><text x="665" y="333">ald</text><text x="665" y="345">im</text></g>
    <g font-style="italic" fill="#b3404f"><text x="41" y="443">Schiersteiner Kreuz</text><text x="81" y="456">3</text><text x="2" y="457">nstein</text><text x="12" y="639">Mainz-Gonsenheim</text><text x="51" y="652">5</text><text x="2" y="671">reck Mainz</text><text x="13" y="683">6</text><text x="876" y="315">Krifteler-Dreieck</text><text x="847" y="340">Hattersheim</text><text x="869" y="353">12</text><text x="918" y="351">Frankfurt</text><text x="695" y="433">Hofheim am Taunus</text><text x="735" y="446">11</text></g></g>
   <g font-size="11.300" font-weight="bold"><g fill="#c000c0"><text x="424" y="158">DF132</text><text x="577" y="249">DF403</text><text x="775" y="175">DF439</text><text x="861" y="336">FT25</text><text x="832" y="343">FI25</text><text x="682" y="390">41TAC</text><text x="697" y="492">DF394</text><text x="33" y="589">D252E</text><text x="99" y="663">DF631</text><text x="619" y="725">DF519</text><text x="676" y="677">AT</text><text x="674" y="703">LE</text></g>
    <g fill="none" stroke="#c000c0" stroke-width="1.500"><path d="M414 158l4-9 4 9zM568 249l4-9 4 9zM765 175l4-9 4 9zM852 336l4-9 4 9zM822 343l4-9 4 9zM673 389l4-9 4 9zM687 491l4-9 4 9zM23 589l4-9 4 9zM89 663l4-9 4 9zM609 725l4-9 4 9z"/></g>
    <text transform="translate(665 372) rotate(-20)" x="0" y="0" textLength="138">60 / 251°M / GS 3.0° / DME</text><text transform="translate(664 597) rotate(-17)">M10.9</text></g>
   <g font-size="11" text-anchor="middle"><path d="M832 187h40v18h-40zM662 274h46v17h-46z" fill="#e9d9ac" stroke="#b9a778"/><path d="M786 404h34v18h-34zM501 263h28v18h-28z" fill="#e0a0ac" stroke="#b06a7c"/><text x="852" y="201">B 519</text><text x="685" y="287">L 3018</text><text x="803" y="418" fill="#5c2030">A 66</text><text x="515" y="276" fill="#5c2030">A 3</text><text x="13" y="698" fill="#7c2840">A 66</text></g>
   <g><circle cx="28.500" cy="395.500" r="9" fill="#fff" stroke="#7b365c" stroke-width="3"/><path d="M25.500 391v9M31.500 391v9M25.500 395.500h6" stroke="#7b365c" stroke-width="2"/><path d="M49 381h90v14h-32v14H49z" fill="#fff"/><g font-size="11.300" font-weight="bold" fill="#7b365c"><text x="49" y="394">Wiesbaden Unfallklinik</text><text x="49" y="407">206m - 0m</text></g></g>
   <g font-size="11.300" font-weight="bold" fill="#fff"><text x="18" y="696">50° 00' 00,0"N</text><text x="470" y="726">8° 30' 00,0"E</text></g>
   <rect x="13" y="698.500" width="486" height="27" fill="#aaa" fill-opacity=".5" stroke="#000"/><path d="M20 715h453v6H20z"/><path d="M133 716.500h113v3H133zM359 716.500h113v3H359z" fill="#fff"/><path d="M473 715h7v6h-7z" fill="#777"/>
   <g font-size="12"><text x="18" y="714">0 nm</text><text x="240" y="714">3</text><text x="463" y="714">6</text></g>
   <rect x="12.500" y="150.500" width="175" height="95" fill="#cdd3cd" fill-opacity=".88" stroke="#000"/>
   <g transform="translate(0 120) scale(.4337 .3333)" stroke="#000" stroke-width="1.500" stroke-linejoin="round">
    <path d="M40 140L58 133 100 130 112 136 130 128 150 134 172 156 166 172 152 182 142 194 143 206 136 198 122 198 122 208 132 212 134 220 146 226 138 224 118 210 106 192 98 180 96 162 84 150 60 152 44 150Z"/><path d="M108 124L130 120 150 122 140 130 116 130Z"/><path d="M155 120L180 115 216 116 200 134 188 146 180 132Z"/>
    <path d="M148 226L168 224 192 240 188 262 178 278 168 298 160 312 154 306 152 270 146 244Z"/>
    <path d="M222 178L224 168 236 162 240 152 250 148 244 142 262 124 280 132 310 124 335 120 380 128 422 136 418 144 396 150 388 166 380 152 366 160 362 182 350 196 343 206 346 222 338 214 334 202 326 202 316 226 306 204 290 202 298 208 282 218 272 198 262 184 250 178 236 174Z"/><path d="M214 202L224 184 250 184 272 192 282 216 293 218 276 244 270 264 258 284 248 282 243 250 238 230 220 226 213 214Z"/>
    <path d="M224 158l6-8 3 10zM278 258l5-4-3 18-5 0zM352 268L366 254 380 256 386 250 394 272 386 290 372 284 356 288Z"/><path d="M332 218l18 22M344 242l14 2M350 226l8-6 2 12zM372 232l18 8M374 178l6-14M362 206l4 16M414 290l-6 12" fill="none" stroke-width="4"/>
    <path d="M40 362V350L60 344 110 344 150 346 160 330 172 346 190 346 220 334 300 332 340 336 400 334 422 342V362Z"/><circle cx="238" cy="159" r="4" fill="#fff" stroke="#fff"/></g>
   <g><circle cx="912" cy="199" r="30" fill="#c9c9c9" fill-opacity=".9" stroke="#111" stroke-width="1.300"/><path d="M912 174l5 20 21 5-21 5-5 25-5-25-21-5 21-5z" fill="#fff" stroke="#000" stroke-width=".8"/><path d="M912 174v25l5-5zM938 199h-26l5 5zM912 229v-30l-5 5zM886 199h26l-5-5z"/><text x="908" y="167" font-size="12" font-weight="bold">N</text></g>
   <path d="M890 420h28v85h-28z" fill="#888" fill-opacity=".3"/>
   <g><circle cx="905" cy="376" r="27" fill="#888" opacity=".5"/><circle cx="905" cy="375" r="26.500" fill="#fff"/><path d="M897 361l8-8 8 8zM897 389l8 8 8-8zM891 367l-8 8 8 8z" fill="#444"/><path d="M918 367l8 8-8 8z" fill="#4590cc"/><path d="M894 416l11 3 11-3v18q-3 9-11 9t-11-9zM894 480v-16q3-9 11-9t11 9v16z" fill="#fff"/><path d="M898 429l7-6 7 6-1 1v5h-4v-4h-4v4h-4v-5z" fill="#333"/><path d="M905 463v10M900 468h10" stroke="#222" stroke-width="2"/><path d="M899 480h12v25h-12z" fill="#2c2f32"/></g>
  </svg>
  <div class="qtabs btabs" style="margin-left:-2px;border-top:1px solid #b2aeab;height:26px"><div class="qtab cur" style="width:57px">CARTE</div><div class="qtab" style="width:93px">PLAN DE VOL</div></div>
  <div class="dots" style="height:8px">......</div>
  <div class="dock-title" style="padding-left:2px"><span>INFORMATIONS</span></div>
  <div class="qtabs" style="height:24px"><div class="qtab" style="width:84px">Aérodrome</div><div class="qtab" style="width:106px">Pistes/Héliports</div><div class="qtab" style="width:50px">COM</div><div class="qtab" style="width:117px">Procédures de Vol</div><div class="qtab cur" style="width:58px">Météo</div><div class="qtab" style="width:147px">Navaid/Voies Aériennes</div><div class="qtab" style="width:105px">Espaces Aériens</div></div>
  <div class="pane flex-grow-1" style="padding:3px;width:953px;margin-bottom:1px;min-height:0">
   <div class="d-flex bg-white h-100" style="border:1px solid #b2aeab">
    <div class="flex-grow-1 overflow-hidden" style="padding:4px 0 0 4px">
     <div class="d-flex" style="height:38px"><svg width="18" height="18" viewBox="0 0 18 18" style="margin-right:7px"><circle cx="9" cy="9" r="9" fill="#15487e"/><circle cx="9" cy="9" r="5.500" fill="none" stroke="#fff" stroke-width="1.300"/><circle cx="9" cy="9" r="2" fill="#15487e" stroke="#fff"/></svg><div style="padding-top:5px"><b style="font-size:13px">Wiesbaden Erbenheim AAF (ETOU)</b>&nbsp;&nbsp;<span style="color:#2a2ab0">Carte</span></div></div>
     <div class="fw-bold" style="font-size:12.600px;line-height:14px;height:15px">Station Météo (XP11)</div>
     <table class="info" style="width:258px"><tr><td style="width:140px"><b>Heure:</b><td>04/11/2017 13:16 UTC<tr><td><b>Type de rapport:</b><td>Auto<tr><td><b>Température:</b><td>10°C, 50°F<tr><td><b>Point de rosée:</b><td>8°C, 46°F<tr><td><b>Pression atmosphérique:</b><td>1 010 hPa, 29,83 inHg<tr><td><b>Visibilité:</b><td>8,0 km<tr><td><b>Conditions:</b><td>Modéré mist</table>
     <div class="fw-bold" style="margin-top:10px;height:17px">Nuages</div>
     <table class="info" style="width:122px"><tr><td style="width:77px"><b>Peu nuageux</b><td>274 m</table>
    </div>
    <div class="track d-flex flex-column justify-content-end" style="width:15px"><div class="arr"><i class="dn"></i></div></div>
   </div>
  </div>
 </section>

 <section class="d-flex flex-column" style="width:963px;padding:0 3px 0 9px">
  <div class="dock-title" style="padding:0 2px 0 1px"><span>RECHERCHE</span><span class="d-flex" style="gap:3px"><svg class="dk"><use href="#dock"/></svg><svg class="dk"><use href="#close"/></svg></span></div>
  <div class="qtabs" style="height:25px"><div class="qtab cur" style="width:95px">Aérodrome(s)</div><div class="qtab" style="width:66px">Navaids</div><div class="qtab" style="width:117px">Procédures de Vol</div></div>
  <div class="pane form-col d-flex flex-column" style="height:725px;padding:3px 3px 0 2px;flex:none">
   <div class="d-flex" style="gap:3px;height:28px"><div class="inp" style="width:271px">Code OACI</div><div class="inp" style="width:544px">Nom de l'Aérodrome</div><div class="sbtn"><svg><use href="#broom"/></svg></div><div class="sbtn"><svg><use href="#clr"/></svg></div><div class="sbtn"><svg><use href="#q"/></svg></div><div class="sbtn" style="width:34px"><svg><path d="M1 3h13M1 8h13M1 13h13" stroke="#444" stroke-width="2.300"/></svg><i class="dn" style="transform:scale(.7);margin-top:12px"></i></div></div>
   <div class="d-flex" style="gap:3px;height:27px"><div class="inp" style="width:313px">Ville</div><div class="inp flex-grow-1">État / Province</div></div>
   <div class="hline"></div>
   <div class="d-flex align-items-center" style="margin-top:5px;height:20px"><i class="chk mid"></i><span style="width:170px">S<u>u</u>pplémentaire</span><i class="chk mid"></i><span><u>E</u>clairage</span></div>
   <div class="d-flex align-items-center" style="height:23px;margin-bottom:5px"><div class="combo" style="width:183px;margin-right:6px">Toutes les évaluations</div><i class="chk mid"></i><span><u>T</u>our de Contrôle</span></div>
   <div class="hline"></div>
   <div class="d-flex align-items-center" style="gap:3px;height:31px"><div class="combo" style="width:313px">N'importe quelle ou aucune Rampe</div><div class="combo flex-grow-1">N'importe quel carburant</div></div>
   <div class="hline"></div>
   <div class="d-flex align-items-center" style="height:32px"><span style="width:125px;white-space:nowrap">Longueur de Piste: <u>M</u>in:</span><div class="inp val" style="width:300px">0 m</div><div class="combo ms-1 flex-grow-1"> &nbsp;</div></div>
   <div class="hline"></div>
   <div class="d-flex align-items-center" style="height:32px"><span style="width:106px;white-space:nowrap">Élévation: <u>M</u>inimale:</span><div class="inp val flex-grow-1 justify-content-between">-1 500 m<span class="track d-flex flex-column gap-1 justify-content-center h-100" style="background:#f8f5f2;padding:0 3px"><i class="dn" style="transform:rotate(180deg);opacity:.5"></i><i class="dn"></i></span></div></div>
   <div class="hline"></div>
   <div class="d-flex align-items-center" style="height:32px"><i class="chk"></i><span style="width:52px"><u>D</u>istance</span><span class="text-end" style="width:24px;margin-right:3px">M<u>i</u>n:</span><div class="inp val off" style="width:300px">0 km</div><div class="combo dim ms-1 flex-grow-1">&nbsp;</div></div>
   <div class="hline"></div>
   <div class="inp focus" style="margin-top:3px;height:24px"><i style="width:1px;height:15px;background:#000"></i>Emplacement de la scène</div>
   <div class="d-flex flex-column" style="margin-top:3px;height:415px;border:1px solid #b2aeab;border-right-color:#ccc">
    <div class="d-flex overflow-hidden" style="height:400px;flex:none"><table class="air"><colgroup><col style="width:25px"><col style="width:100px"><col style="width:100px"><col style="width:100px"><col style="width:100px"><col style="width:100px"><col style="width:100px"><col style="width:100px"><col style="width:100px"><col style="width:100px"><col style="width:5px"></colgroup><thead><tr><th colspan="2" style="text-align:left;padding-left:49px">OACI<i class="dn d-inline-block" style="transform:rotate(180deg) scale(.9);margin:0 0 2px 27px"></i><th>Nom<th>Ville<th><th><th><th><th><th class="text-nowrap" style="direction:rtl;overflow:hidden">Tour de Contrôle<br>MHz<th></tr></thead><tbody id="rows"></tbody></table>
     <div class="track d-flex flex-column justify-content-between" style="width:15px;flex:none"><div style="height:42px;background:#f8f5f2;border-bottom:1px solid #b9b5b2"><div class="arr"><i class="dn" style="transform:rotate(180deg)"></i></div></div><div class="arr" style="border-top:1px solid #b9b5b2"><i class="dn"></i></div></div></div>
    <div class="d-flex track" style="height:13px;border-top:1px solid #b2aeab"><div style="width:596px;background:linear-gradient(#fdfbf9,#ece8e5);border-right:1px solid #b2aeab"></div><div class="ms-auto d-flex align-items-center justify-content-center" style="width:14px;background:#f8f5f2;margin-right:14px;border:1px solid #bbb;border-width:0 1px"><i class="dn" style="transform:rotate(-90deg)"></i></div></div>
   </div>
   <div class="text-end" style="width:278px;padding-top:3px;white-space:nowrap">1 sur 256 sélectionné(s), 256 visible(s).</div>
  </div>
  <div class="qtabs btabs" style="margin:2px -3px 0 0;border-top:1px solid #b2aeab;height:26px"><div class="qtab" style="width:141px"></div><div class="qtab cur" style="width:86px">RECHERCHE</div></div>
  <div class="dots" style="height:6px">......</div>
  <div class="dock-title" style="padding-right:2px"><span class="text-end" style="width:199px;white-space:nowrap">PROFIL D'ÉLÉVATION DU PLAN DE VOL</span><span class="d-flex" style="gap:3px"><svg class="dk"><use href="#dock"/></svg><svg class="dk"><use href="#close"/></svg></span></div>
  <svg width="953" height="98" viewBox="965 960 953 98" style="overflow:hidden;margin:auto 0 0 -1px;flex:none"><path d="M965 960h953v98H965z" fill="#fff"/><path d="M1030 960h823v98h-823z" fill="#ccccff"/>
   <g class="ns" transform="translate(960 680) scale(.6122 .3333)" fill="none">
    <path d="M114 953h1345" stroke="#b9b9dc" stroke-width="2"/>
    <path d="M114 1134V1116H415L430 1108 450 1106 466 1092 480 1107 500 1102 532 1096 550 1075 562 1066 575 1056 588 1054 600 1046 612 1048 620 1045 636 1046 648 1070 660 1052 676 1070 686 1076 696 1060 712 1050 725 1054 740 1052 756 1056 772 1054 784 1036 800 1062 808 1074 818 1078 836 1068 852 1078 862 1064 880 1056 892 1048 900 1058 920 1056 945 1060 978 1068 986 1084 1040 1090 1064 1102 1160 1106 1260 1106 1360 1112 1459 1116V1134Z" fill="#008000" stroke="#004400"/>
    <path d="M110 990h1352" stroke="#f00000" stroke-width="4"/>
    <path d="M120 1118h1335" stroke="#000" stroke-width="5"/><path d="M120 1118h1335" stroke="#ff0" stroke-width="2.300"/>
    <path d="M118 1130Q108 1085 130 1070M122 1098L140 1082 160 1060 178 1054 200 1034 240 1020 264 988 280 1002 306 996 325 1006 350 1010 380 1020 415 1030 440 1006 490 1014 510 990 530 988 555 964 578 964 600 940" stroke="#000" stroke-width="2" stroke-dasharray="7 4"/>
    <path d="M600 940l14-20 6-22 8-10M612 944l16-36M606 940l20-22-10-14 14 30 8-22 10-18M618 940l14-30M622 934l10 24M634 950l8-30 8-20 1-8M598 944l20-10M640 950l4-16M612 906l8 0" stroke="#000" stroke-width="2" stroke-dasharray="9 2"/></g>
   <ellipse cx="1031" cy="1053" rx="6" ry="5" fill="#14508c"/><path d="M1027 1056l5-12v13" stroke="#000" stroke-width="2"/><ellipse cx="1853" cy="1053" rx="5" ry="6" fill="#14508c"/><path d="M1850 1053h6" stroke="#fff" stroke-width="2"/>
   <g font-size="11" font-weight="bold"><g fill="#9a9a9a"><text x="996" y="1002" font-weight="normal">5000</text><text x="1857" y="1002" font-weight="normal">5000</text></g><text x="980" y="1014" fill="#e00000">4 000 m</text><text x="995" y="1056">7</text><text x="1002" y="1057">364</text><text x="1857" y="1056">471 m</text></g></svg>
 </section>
</main>
<footer class="status d-flex"><span style="width:982px;padding-left:6px">Afficher Jet airways sur la carte</span><span class="text-center" style="width:188px">Connexion à (X-Plane) en attente...</span><span class="text-center" style="width:168px">AP,A,E,H,S / V,N,I,W / OACI,RSTR</span><span class="text-center" style="width:124px">Détail +3</span><span class="text-center" style="width:149px">Terminé.</span><span class="text-center" style="width:64px">6,8 km</span><span class="text-center" style="width:247px">Aucune position</span></footer>

<ul class="dropdown-menu ctx" id="m1" style="left:133px;top:270px;width:532px;height:437px"></ul>
<ul class="dropdown-menu ctx" id="m2" style="left:688px;top:503px;width:465px;height:462px"></ul>
<ul class="dropdown-menu ctx" id="m3" style="left:1302px;top:192px;width:534px;height:491px"></ul>

<script>
const acc = s => s.replace(/&(.)/g, '<u>$1</u>');
const ico = n => n ? `<svg><use href="#${n}"/></svg>` : '<svg></svg>';
// Toolbars: "|" is a separator, ":" a grip, "*" a pressed button, "!" a highlighted one.
const bar = (id, list) => document.getElementById(id).innerHTML = '<span class="grip first"></span>' + list.split(' ').map(t => {
  if (t === '|') return '<span class="vsep"></span>';
  if (t === ':') return '<span class="grip"></span>';
  const on = t[0] === '*' ? ' on' : t[0] === '!' ? ' lit' : '';
  const [n, lab, col] = t.replace(/^[*!]/, '').split('/');
  const tag = lab ? `<svg viewBox="0 0 22 22" style="color:${col}"><use href="#${n}"/>${lab === '_' ? '' : `<rect x="1" y="14" width="20" height="8" fill="#d8d5d2" stroke="#aaa" stroke-width=".5"/><text x="11" y="21" font-size="7.500" font-weight="bold" text-anchor="middle">${lab}</text><path d="M20 21h6l-3 4z" fill="#222"/>`}</svg>` : ico(n);
  return `<span class="tb${on}">${tag}</span>`;
}).join('');
bar('bar1', 'new open save : home cplus croute | cplane planex | back fwd : findp find findm | *apts *apt *apto | *aptg | *vor *ndb *wpt *ils airv !airj | *route clip | *gplane *ptrail | *planeA *shipA | *globe *ring *hill |');
document.getElementById('bar1').insertAdjacentHTML('beforeend', '<div class="combo" style="width:84px;margin-right:1px;padding:0 5px 0 4px">Sphérique</div><div class="combo" style="width:159px">OpenStreetMap</div>');
bar('bar2', 'undo redo dep *edit | radd | calc rv rj rvv ra calcb | alt : *as/_/#c33 *as/ICAO/#c33 as/FIR/#c33 *asg/RSTR/#e22 asg/SPEC/#888 asg/OTR/#888 asalt : *wf *wr *wi *wh *wp wl');
// Menu rows: [icon, label, shortcut, flag]; flag 0 = disabled, 1 = enabled, 2 = highlighted, 3 = disabled submenu.
const menu = (id, key, list) => document.getElementById(id).innerHTML = list.map(r => r === '-' ? '<li class="line"></li>' :
  `<li><a class="dropdown-item${[' disabled','',' hl',' disabled'][r[3]]}">${ico(r[0])}<span style="width:${key}px;white-space:pre">${acc(r[1])}</span><span class="key">${r[2]}</span>${r[3]===3?'<i class="dn ms-auto" style="transform:rotate(-90deg);opacity:.35"></i>':''}</a></li>`).join('');
menu('m1', 423, [['doc','Afficher les Informations','Ctrl+I',0],['clip','Afficher les &Procédures','Ctrl+Shift+R',0],['docg','Afficher la sélection sur la Carte','Ctrl+M',0],['act',"Activer l'étape du Plan de Vol",'Ctrl+L',0],'-',
['up',"Déplacer l'étape sélectionnée vers le haut",'Ctrl+Up',1],['down',"Déplacer l'étape sélectionnée vers le bas",'Ctrl+Down',1],['no',"Supprimer l'étape ou la procédure sélectionnée",'',1],['name','Editer le nom du point fixe utilisateur','',0],'-',['','Calculer pour les étapes &sélectionnées','',3],'-',
['rings','Afficher les anneaux de portée','',0],['nring','Afficher les anneaux de Navaid','',0],['ringx','Supprimer tous les anneaux de portée et les mesures de distance','',0],'-',['copy','&Copier','Ctrl+C',0],['','Sélectionner &Tout','Ctrl+A',1],['clr','Effacer la &Sélection','Ctrl+Shift+A',0],'-',['rst','&Réinitialiser la Vue','',1],'-',['plus','Réglage du centre pour la recherche de distance','',0]]);
menu('m2', 400, [['doc','Afficher les Informations pour','',0],['clip','Afficher les &Procédures pour','',0],'-',['gc','Mesurez la distance GC à partir de ici','',1],['rh','Mesurer la distance Rhumb à partir de ici','',1],['gcx','Retirer la mesure de distance','',0],'-',['rings','Afficher les anneaux de portée','',1],['nring','Afficher les Anneaux de Navaid pour','',0],['ring1',"Retirer l' anneau de portée",'',0],['ringx','Supprimer tous les anneaux de portée et les mesures de distance','',0],'-',['setd','Définir  comme Départ du Plan de Vol','',0],['sete','Définir  comme Destination du Plan de Vol','',0],'-',['rplus','Ajouter Position au Plan de Vol','',1],['rplus','Joindre Position au Plan de Vol','',1],['no','Supprimer du Plan de Vol','',0],['name','Editer le nom pour Point utilisateur','',0],'-',['mag','Afficher  dans la recherche','',0],'-',['plus','Réglage du centre pour la recherche de distance','',1],['home','Définir la Maison (centre de la carte visible)','',1]]);
menu('m3', 423, [['doc','Afficher les Informations','Ctrl+I',1],['clip','Afficher les &Procédures','Ctrl+Shift+R',1],['docg','Afficher la sélection sur la Carte','Ctrl+M',2],'-',['findp','Filtrer par entrées et en &incluant ""','',1],['findm','Filtrer par entrées e&xcluant ""','',1],'-',['broom','Réinitialis&er la Recherche','Ctrl+R',1],['all','&Montrer tout','Ctrl+Shift+O',1],'-',['rings','Afficher les anneaux de portée','',1],['nring','Afficher les anneaux de navaid','',0],['ringx','Supprimer tous les anneaux de portée et les mesures de distance','',0],'-',['setd','Définir comme Départ du Plan de Vol','',1],['sete','Définir comme Destination du Plan de Vol','',1],'-',['rplus','Ajouter au Plan de Vol','',1],['rplus','Joindre au Plan de Vol','',1],'-',['copy','&Copier','Ctrl+C',1],['','Sélectionner &Tout','Ctrl+A',1],['clr','Effacer la &Sélection','Ctrl+Shift+A',1],'-',['rst','&Réinitialiser la Vue','',1],'-',['plus','Réglage du centre pour la recherche de distance','',1]]);
// Airport rows: name, city, country, stars, elevation, variation, tower frequency.
const air = [['Dongta','Shenyang'],['','Yanji','',0,'','','118,750'],['','Shenyang','',0,'','','124,300'],['Zhoushuizi','Dalian','',0,'','','118,850'],['','Qiqihar','',0,'','','130,000'],['','Mudanjiang','',0,'','','118,600'],['','Jiamusi','',0,'','','118,850'],['','Harbin','',0,'','','118,100'],['','Changchun','',0,'','','118,850'],['','Ürümqi','',0,'','','125,000'],['','Hotan','China',1,'1 424','2,8° Est','130,000'],['','Kashgar','China',1,'1 380','3,9° Est','130,000'],['','Burqin','China',4,'1 190','4,5° Est','118,100'],['','Korla','China',2,'930','2,7° Est',''],['','','',4,'1 558','2,1° Ouest',''],['','Qiemo','China',3,'1 244','2,1° Est','118,850'],['Shangri La','','',2,'1 976','1,3° Ouest',''],['','Yibin','China',2,'330','1,9° Ouest',''],['','','',3,'470','1,9° Ouest','118,300']];
document.getElementById('rows').innerHTML = air.map((r,i) => `<tr${i===4?' class="pick"':''}><td>${i+1}<td>${i?'':'<span class="d-flex justify-content-between fw-bold"><svg width="17" height="17" viewBox="0 0 22 22" style="margin-left:3px"><circle cx="11" cy="11" r="10.500" fill="#7b365c"/><path d="M6 16L16 6" stroke="#fff" stroke-width="3"/></svg>ZYYY</span>'}<td>${r[0]}<td>${r[1]}<td><td>${r[2]||''}<td style="font-size:12px">${r[3]?'★'.repeat(r[3])+'−'.repeat(5-r[3]):''}<td class="text-end">${r[4]||''}<td class="text-end">${r[5]||''}<td class="text-end">${r[6]||''}<td></tr>`).join('');
</script>
<script src="https://cdn.jsdelivr.net/npm/bootstrap@5.3.0/dist/js/bootstrap.bundle.min.js"></script>
</body>
</html>
